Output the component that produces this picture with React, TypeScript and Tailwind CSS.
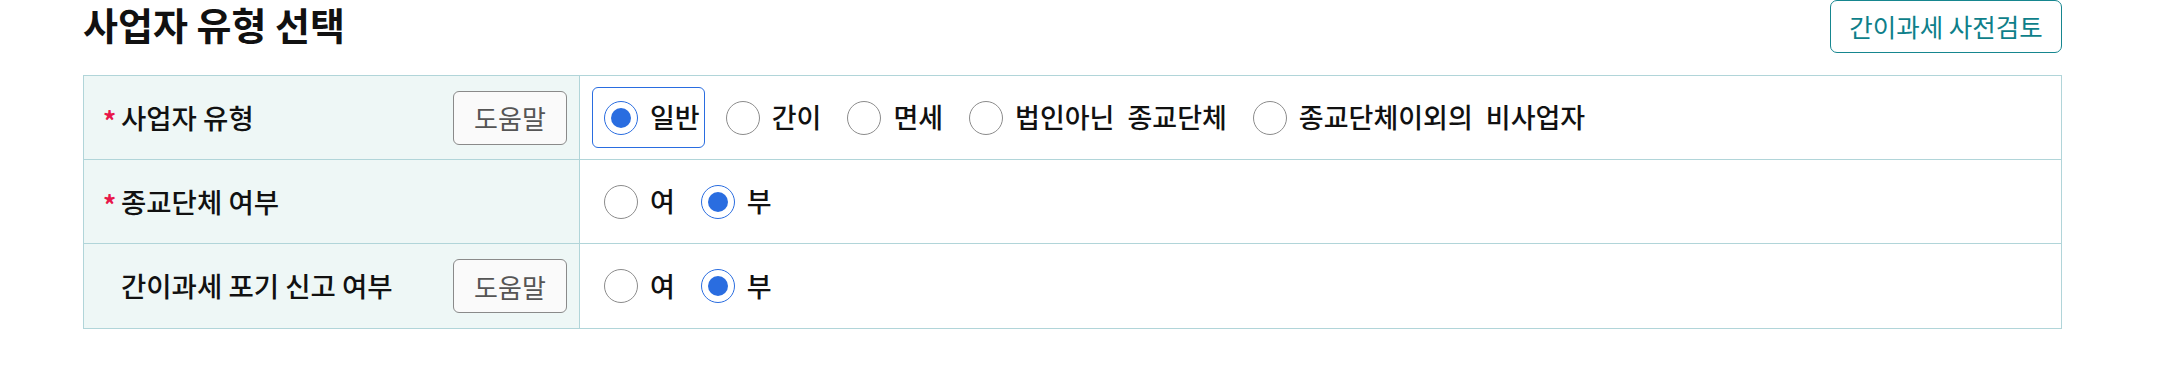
import { useState } from 'react'

type Opt = { value: string; label: string }

const bizTypes: Opt[] = [
  { value: 'general', label: '일반' },
  { value: 'simple', label: '간이' },
  { value: 'exempt', label: '면세' },
  { value: 'religion', label: '법인아닌 종교단체' },
  { value: 'other', label: '종교단체이외의 비사업자' },
]

const yesNo: Opt[] = [
  { value: 'Y', label: '여' },
  { value: 'N', label: '부' },
]

const Radio = ({ checked }: { checked: boolean }) => (
  <span
    className={
      checked
        ? 'flex h-[34px] w-[34px] shrink-0 items-center justify-center rounded-full border border-[#2a6de0] bg-white'
        : 'flex h-[34px] w-[34px] shrink-0 items-center justify-center rounded-full border border-[#8c8c8c] bg-white'
    }
  >
    {checked && <span className="h-[20px] w-[20px] rounded-full bg-[#2a6de0]" />}
  </span>
)

const RadioGroup = ({
  options,
  value,
  onChange,
  boxed,
}: {
  options: Opt[]
  value: string
  onChange: (v: string) => void
  boxed?: boolean
}) => (
  <div className="flex items-center gap-[9px]">
    {options.map((o) => {
      const checked = o.value === value
      return (
        <button
          key={o.value}
          onClick={() => onChange(o.value)}
          className={
            checked && boxed
              ? 'flex h-[61px] items-center gap-[12px] rounded-[6px] border border-[#2a6de0] pl-[11px] pr-[4px] text-[27px] font-medium text-[#111]'
              : 'flex h-[61px] items-center gap-[12px] rounded-[6px] border border-transparent pl-[11px] pr-[4px] text-[27px] font-medium text-[#111]'
          }
        >
          <Radio checked={checked} />
          <span className="[word-spacing:7px]">{o.label}</span>
        </button>
      )
    })}
  </div>
)

const HelpButton = () => (
  <button className="h-[54px] w-[114px] rounded-[6px] border border-[#8a8a8a] bg-[#fafafa] text-[26px] text-[#555]">
    도움말
  </button>
)

const Row = ({
  label,
  required,
  help,
  children,
  last,
}: {
  label: string
  required?: boolean
  help?: boolean
  children: React.ReactNode
  last?: boolean
}) => (
  <div className={last ? 'flex h-[84px]' : 'flex h-[84px] border-b border-[#b1d5d9]'}>
    <div className="flex w-[496px] shrink-0 items-center justify-between border-r border-[#b1d5d9] bg-[#eef7f6] pr-[12px] pl-[19px]">
      <div className="flex items-center text-[27.5px] font-medium text-[#111]">
        <span
          className={
            required
              ? 'w-[18px] pt-[4px] text-[26px] font-bold leading-none text-[#e8174a]'
              : 'w-[18px]'
          }
        >
          {required ? '*' : ''}
        </span>
        <span>{label}</span>
      </div>
      {help && <HelpButton />}
    </div>
    <div className="flex flex-1 items-center pl-[12px]">{children}</div>
  </div>
)

export default function App() {
  const [bizType, setBizType] = useState('general')
  const [religion, setReligion] = useState('N')
  const [giveUp, setGiveUp] = useState('N')

  return (
    <div
      className="h-[387px] w-[2184px] bg-white"
      style={{ fontFamily: '"Noto Sans CJK KR", "Noto Sans", sans-serif' }}
    >
      <div className="ml-[83px] w-[1979px]">
        <div className="flex h-[75px] items-start justify-between">
          <h2 className="pt-[2px] text-[38px] font-bold leading-[44px] text-[#111]">사업자 유형 선택</h2>
          <button className="h-[53px] w-[232px] rounded-[7px] border border-[#16868f] text-[25.5px] text-[#0e7f8a]">
            간이과세 사전검토
          </button>
        </div>

        <div className="border border-[#b1d5d9]">
          <Row label="사업자 유형" required help>
            <RadioGroup options={bizTypes} value={bizType} onChange={setBizType} boxed />
          </Row>
          <Row label="종교단체 여부" required>
            <RadioGroup options={yesNo} value={religion} onChange={setReligion} />
          </Row>
          <Row label="간이과세 포기 신고 여부" help last>
            <RadioGroup options={yesNo} value={giveUp} onChange={setGiveUp} />
          </Row>
        </div>
      </div>
    </div>
  )
}
